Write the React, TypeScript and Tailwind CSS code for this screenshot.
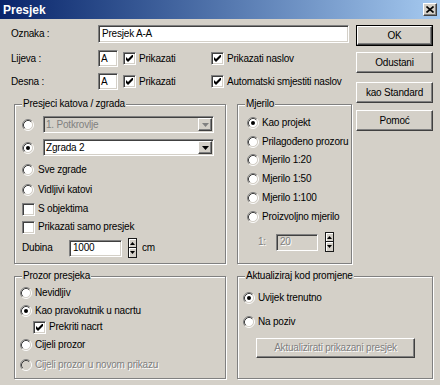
import React from "react";

const sunken =
  "border border-t-[#808080] border-l-[#808080] border-r-white border-b-white shadow-[inset_1px_1px_0_#404040,inset_-1px_-1px_0_#d4d0c8]";
const raised =
  "border border-t-white border-l-white border-r-[#404040] border-b-[#404040] shadow-[inset_-1px_-1px_0_#808080] bg-[#d4d0c8]";
const disabledText = "text-[#808080] [text-shadow:1px_1px_0_#ffffff]";

function Radio({ checked, disabled }: { checked?: boolean; disabled?: boolean }) {
  const bg = disabled ? "#d4d0c8" : "#ffffff";
  return (
    <svg width="12" height="12" viewBox="0 0 12 12" className="shrink-0">
      <circle cx="6" cy="6" r="4.5" fill={bg} />
      <path d="M2.11 9.89 A5.5 5.5 0 0 1 9.89 2.11" stroke="#808080" fill="none" />
      <path d="M9.89 2.11 A5.5 5.5 0 0 1 2.11 9.89" stroke="#ffffff" fill="none" />
      <path d="M2.82 9.18 A4.5 4.5 0 0 1 9.18 2.82" stroke="#404040" fill="none" />
      <path d="M9.18 2.82 A4.5 4.5 0 0 1 2.82 9.18" stroke="#d4d0c8" fill="none" />
      {checked && <circle cx="6" cy="6" r="2" fill="#000000" />}
    </svg>
  );
}

function Check({ checked }: { checked?: boolean }) {
  return (
    <span className={`w-[13px] h-[13px] shrink-0 bg-white flex items-center justify-center ${sunken}`}>
      {checked && (
        <svg width="7" height="7" viewBox="0 0 7 7">
          <polygon points="0,2 2,4 7,-1 7,2 2,7 0,5" fill="#000000" />
        </svg>
      )}
    </span>
  );
}

function Arrow({ dir, color }: { dir: "up" | "down"; color: string }) {
  return dir === "down" ? (
    <svg width="7" height="4" viewBox="0 0 7 4">
      <polygon points="0,0 7,0 3.5,4" fill={color} />
    </svg>
  ) : (
    <svg width="5" height="3" viewBox="0 0 5 3">
      <polygon points="0,3 5,3 2.5,0" fill={color} />
    </svg>
  );
}

function Combo({ text, disabled }: { text: string; disabled?: boolean }) {
  return (
    <div
      className={`w-[171px] h-[17px] flex items-center ${sunken} ${disabled ? "bg-[#d4d0c8]" : "bg-white"}`}
    >
      <span className={`pl-[2px] flex-1 ${disabled ? "text-[#808080]" : "text-black"}`}>{text}</span>
      <div className={`w-[14px] h-[13px] mr-[1px] flex items-center justify-center ${raised}`}>
        <Arrow dir="down" color={disabled ? "#808080" : "#000000"} />
      </div>
    </div>
  );
}

function Spinner() {
  return (
    <div className="flex flex-col w-[9px] h-[20px] shrink-0">
      <div className="h-[10px] border border-[#1a1a1a] bg-[#d4d0c8] flex items-center justify-center shadow-[inset_1px_1px_0_#ffffff]">
        <Arrow dir="up" color="#000000" />
      </div>
      <div className="h-[10px] border border-[#1a1a1a] border-t-0 bg-[#d4d0c8] flex items-center justify-center shadow-[inset_1px_1px_0_#ffffff]">
        <svg width="5" height="3" viewBox="0 0 5 3">
          <polygon points="0,0 5,0 2.5,3" fill="#000000" />
        </svg>
      </div>
    </div>
  );
}

function Group({
  title,
  className,
  children,
}: {
  title: string;
  className: string;
  children: React.ReactNode;
}) {
  return (
    <div className={`relative border border-[#808080] shadow-[inset_1px_1px_0_#ffffff,1px_1px_0_#ffffff] ${className}`}>
      <span className="absolute -top-[7px] left-[7px] px-[1px] bg-[#d4d0c8] leading-[12px]">{title}</span>
      {children}
    </div>
  );
}

function RadioRow({
  label,
  checked,
  disabled,
  gap,
  className,
}: {
  label: string;
  checked?: boolean;
  disabled?: boolean;
  gap: string;
  className?: string;
}) {
  return (
    <div className={`flex items-center h-[16px] ${className ?? ""}`}>
      <Radio checked={checked} disabled={disabled} />
      <span className={`${gap} ${disabled ? disabledText : ""}`}>{label}</span>
    </div>
  );
}

function Button({ label, isDefault }: { label: string; isDefault?: boolean }) {
  if (isDefault) {
    return (
      <div className="h-[21px] border border-black flex">
        <div className={`flex-1 flex items-center justify-center ${raised}`}>{label}</div>
      </div>
    );
  }
  return <div className={`h-[21px] flex items-center justify-center ${raised}`}>{label}</div>;
}

export default function App() {
  return (
    <div className="w-[440px] h-[385px] bg-[#d4d0c8] overflow-hidden text-black text-[10px] tracking-[-0.2px] leading-[12px] font-['Liberation_Sans',Arial,sans-serif]">
      {/* Title bar */}
      <div className="h-[19px] bg-linear-to-r from-[#0a246a] to-[#a6caf0] flex items-center pl-[3px] pr-[3px]">
        <span className="text-white font-bold text-[12px] tracking-normal">Presjek</span>
        <div className={`ml-auto w-[14px] h-[13px] flex items-center justify-center ${raised}`}>
          <svg width="8" height="7" viewBox="0 0 8 7">
            <path d="M0.5 0.5 L7.5 6.5 M7.5 0.5 L0.5 6.5" stroke="#000000" strokeWidth="1.6" />
          </svg>
        </div>
      </div>

      {/* Top section */}
      <div className="flex pl-[11px] pr-[7px] pt-[6px]">
        <div className="w-[341px] flex flex-col">
          <div className="flex items-center h-[18px]">
            <span className="w-[87px]">Oznaka :</span>
            <div className={`w-[251px] h-[18px] bg-white flex items-center pl-[3px] ${sunken}`}>Presjek A-A</div>
          </div>
          <div className="flex items-center h-[17px] mt-[7px]">
            <span className="w-[87px]">Lijeva :</span>
            <div className={`w-[20px] h-[17px] bg-white flex items-center pl-[2px] ${sunken}`}>A</div>
            <div className="w-[88px] flex items-center ml-[5px]">
              <Check checked />
              <span className="ml-[3px]">Prikazati</span>
            </div>
            <Check checked />
            <span className="ml-[3px]">Prikazati naslov</span>
          </div>
          <div className="flex items-center h-[17px] mt-[6px]">
            <span className="w-[87px]">Desna :</span>
            <div className={`w-[20px] h-[17px] bg-white flex items-center pl-[2px] ${sunken}`}>A</div>
            <div className="w-[88px] flex items-center ml-[5px]">
              <Check checked />
              <span className="ml-[3px]">Prikazati</span>
            </div>
            <Check checked />
            <span className="ml-[3px]">Automatski smjestiti naslov</span>
          </div>

          <div className="flex mt-[14px] pl-[3px]">
            <Group title="Presjeci katova / zgrada" className="w-[212px] h-[160px]">
              <div className="flex flex-col pl-[7px] pt-[11px]">
                <div className="flex items-center h-[17px]">
                  <Radio />
                  <div className="ml-[9px]">
                    <Combo text="1. Potkrovlje" disabled />
                  </div>
                </div>
                <div className="flex items-center h-[17px] mt-[6px]">
                  <Radio checked />
                  <div className="ml-[9px]">
                    <Combo text="Zgrada 2" />
                  </div>
                </div>
                <RadioRow label="Sve zgrade" gap="ml-[4px]" className="mt-[6px]" />
                <RadioRow label="Vidljivi katovi" gap="ml-[4px]" className="mt-[4px]" />
                <div className="flex items-center h-[16px] mt-[3px]">
                  <Check />
                  <span className="ml-[3px]">S objektima</span>
                </div>
                <div className="flex items-center h-[16px] mt-[2px]">
                  <Check />
                  <span className="ml-[3px]">Prikazati samo presjek</span>
                </div>
                <div className="flex items-center h-[20px] mt-[3px]">
                  <span className="w-[47px]">Dubina</span>
                  <div className={`w-[53px] h-[17px] bg-white flex items-center pl-[3px] ${sunken}`}>1000</div>
                  <div className="ml-[6px]">
                    <Spinner />
                  </div>
                  <span className="ml-[5px]">cm</span>
                </div>
              </div>
            </Group>

            <Group title="Mjerilo" className="ml-[11px] w-[115px] h-[160px]">
              <div className="flex flex-col pl-[9px] pt-[10px]">
                <RadioRow label="Kao projekt" checked gap="ml-[3px]" />
                <RadioRow label="Prilagođeno prozoru" gap="ml-[3px]" className="mt-[3px]" />
                <RadioRow label="Mjerilo 1:20" gap="ml-[3px]" className="mt-[2px]" />
                <RadioRow label="Mjerilo 1:50" gap="ml-[3px]" className="mt-[3px]" />
                <RadioRow label="Mjerilo 1:100" gap="ml-[3px]" className="mt-[3px]" />
                <RadioRow label="Proizvoljno mjerilo" gap="ml-[3px]" className="mt-[3px]" />
                <div className="flex items-center h-[20px] mt-[7px] pl-[11px]">
                  <span className={`w-[18px] ${disabledText}`}>1:</span>
                  <div className={`w-[42px] h-[17px] bg-[#d4d0c8] flex items-center pl-[3px] ${sunken} ${disabledText}`}>
                    20
                  </div>
                  <div className="ml-[7px]">
                    <Spinner />
                  </div>
                </div>
              </div>
            </Group>
          </div>
        </div>

        <div className="ml-[4px] w-[77px] flex flex-col">
          <Button label="OK" isDefault />
          <div className="mt-[6px]">
            <Button label="Odustani" />
          </div>
          <div className="mt-[9px]">
            <Button label="kao Standard" />
          </div>
          <div className="mt-[7px]">
            <Button label="Pomoć" />
          </div>
        </div>
      </div>

      {/* Bottom section */}
      <div className="flex pl-[14px] mt-[12px]">
        <Group title="Prozor presjeka" className="w-[212px] h-[103px]">
          <div className="flex flex-col pl-[5px] pt-[8px]">
            <RadioRow label="Nevidljiv" gap="ml-[3px]" />
            <RadioRow label="Kao pravokutnik u nacrtu" checked gap="ml-[3px]" className="mt-[2px]" />
            <div className="flex items-center h-[16px] pl-[13px]">
              <Check checked />
              <span className="ml-[3px]">Prekriti nacrt</span>
            </div>
            <RadioRow label="Cijeli prozor" gap="ml-[3px]" className="mt-[2px]" />
            <RadioRow label="Cijeli prozor u novom prikazu" disabled gap="ml-[3px]" className="mt-[4px]" />
          </div>
        </Group>

        <Group title="Aktualiziraj kod promjene" className="ml-[11px] w-[196px] h-[103px]">
          <div className="flex flex-col pl-[5px] pt-[13px]">
            <RadioRow label="Uvijek trenutno" checked gap="ml-[3px]" />
            <RadioRow label="Na poziv" gap="ml-[3px]" className="mt-[8px]" />
            <div className={`mt-[8px] ml-[13px] w-[159px] h-[20px] flex items-center justify-center ${raised}`}>
              <span className={disabledText}>Aktualizirati prikazani presjek</span>
            </div>
          </div>
        </Group>
      </div>
    </div>
  );
}
